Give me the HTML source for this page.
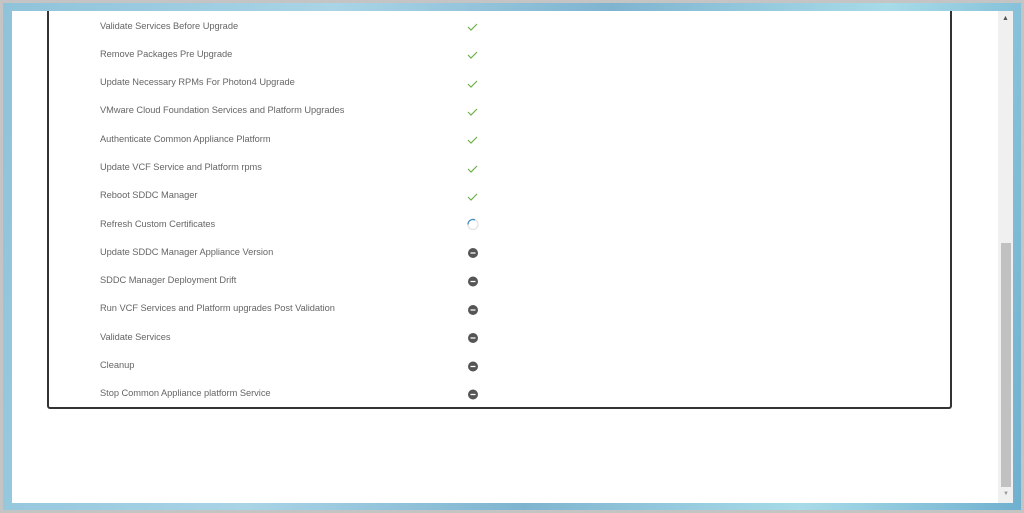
<!DOCTYPE html>
<html><head><style>
body{margin:0;width:1024px;height:513px;overflow:hidden;background:#c4c4c4;font-family:"Liberation Sans",sans-serif;position:relative}
.bg{position:absolute;left:3px;top:3px;right:3px;bottom:3px;background:linear-gradient(100deg,#8fc3da 0%,#a9d4e6 30%,#7fb4d0 55%,#a8dbe8 80%,#6fb0cf 100%)}
.panel{position:absolute;left:12px;top:11px;width:1001px;height:492px;background:#fff}
.sb{position:absolute;left:998px;top:11px;width:15px;height:492px;background:#f0f0f0}
.thumb{position:absolute;left:1001px;top:243px;width:10px;height:244px;background:#c1c1c1}
.box{position:absolute;left:47px;top:11px;width:901px;height:396px;border:2px solid #333;border-top:none;border-radius:0 0 3px 3px}
.row{position:absolute;left:100px;font-size:9.3px;color:#666;letter-spacing:-0.04px}
</style></head><body>
<div class="bg"></div>
<div class="panel"></div>
<div class="sb"></div><div class="thumb"></div>
<div style="position:absolute;left:1002px;top:15px;font-size:7px;color:#555">▲</div>
<div style="position:absolute;left:1003px;top:491px;font-size:6px;color:#999">▼</div>
<div class="box"></div>
<div class="row" style="top:21px">Validate Services Before Upgrade</div>
<div class="row" style="top:49px">Remove Packages Pre Upgrade</div>
<div class="row" style="top:77px">Update Necessary RPMs For Photon4 Upgrade</div>
<div class="row" style="top:105px">VMware Cloud Foundation Services and Platform Upgrades</div>
<div class="row" style="top:134px">Authenticate Common Appliance Platform</div>
<div class="row" style="top:162px">Update VCF Service and Platform rpms</div>
<div class="row" style="top:190px">Reboot SDDC Manager</div>
<div class="row" style="top:219px">Refresh Custom Certificates</div>
<div class="row" style="top:247px">Update SDDC Manager Appliance Version</div>
<div class="row" style="top:275px">SDDC Manager Deployment Drift</div>
<div class="row" style="top:303px">Run VCF Services and Platform upgrades Post Validation</div>
<div class="row" style="top:332px">Validate Services</div>
<div class="row" style="top:360px">Cleanup</div>
<div class="row" style="top:388px">Stop Common Appliance platform Service</div>
<svg width="1024" height="513" style="position:absolute;left:0;top:0">
<g fill="none" stroke="#6bb04a" stroke-width="1.2">
<path d="M468 27l3 3 6-6"/><path d="M468 55l3 3 6-6"/><path d="M468 84l3 3 6-6"/><path d="M468 112l3 3 6-6"/><path d="M468 140l3 3 6-6"/><path d="M468 169l3 3 6-6"/><path d="M468 197l3 3 6-6"/>
</g>
<circle cx="473" cy="224.5" r="5" fill="none" stroke="#e3e3e3" stroke-width="1.3"/>
<path d="M468 224.5a5 5 0 0 1 7-4.6" fill="none" stroke="#4a8fc0" stroke-width="1.3"/>
<g fill="#555">
<circle cx="473" cy="253" r="5"/><circle cx="473" cy="281.5" r="5"/><circle cx="473" cy="310" r="5"/><circle cx="473" cy="338" r="5"/><circle cx="473" cy="366.5" r="5"/><circle cx="473" cy="394.5" r="5"/>
</g>
<g stroke="#fff" stroke-width="1.3">
<path d="M470.5 253h5M470.5 281.5h5M470.5 310h5M470.5 338h5M470.5 366.5h5M470.5 394.5h5"/>
</g>
</svg>
</body></html>
